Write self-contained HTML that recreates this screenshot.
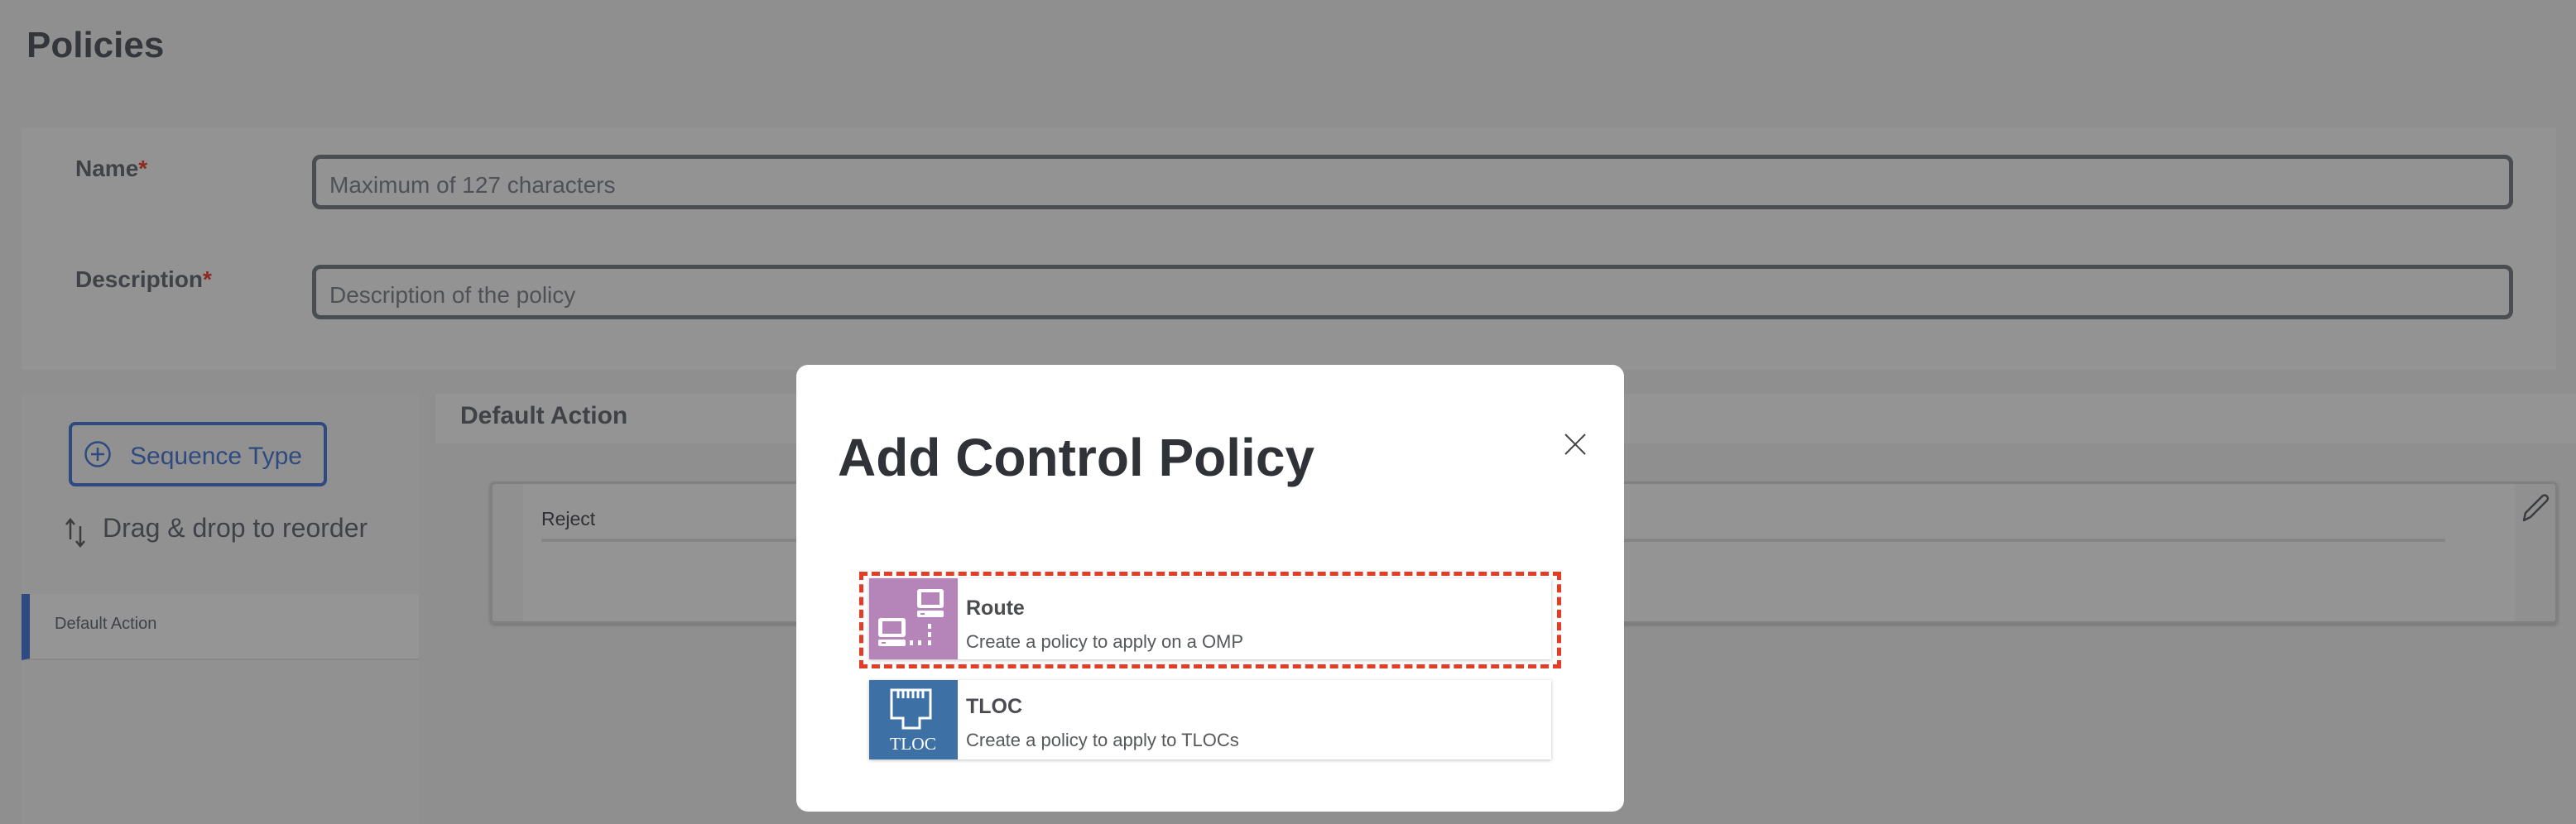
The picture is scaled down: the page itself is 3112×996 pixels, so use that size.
<!DOCTYPE html>
<html><head><meta charset="utf-8"><style>
*{box-sizing:border-box;margin:0;padding:0}
body{width:3112px;height:996px;background:#8f8f8f;font-family:"Liberation Sans",sans-serif;color:#3a3c40;position:relative;overflow:hidden}
.a{position:absolute}
.inp{position:absolute;left:377px;width:2659px;height:66px;border:5px solid #4a4d52;border-radius:10px;font-size:28px;color:#4e5156;padding:16px 0 0 16px}
.lbl{position:absolute;left:91px;font-size:28px;font-weight:bold;color:#3f4247}
.lbl b{color:#8b2a22}
.card{position:absolute;left:1050px;width:824px;background:#fff;box-shadow:0 1px 4px rgba(0,0,0,.25)}
.card .ic{position:absolute;left:0;top:0}
.card .t{position:absolute;left:117px;font-size:25px;font-weight:bold;color:#4a4c50}
.card .d{position:absolute;left:117px;font-size:22px;color:#55585c}
</style></head><body>
<div class="a" style="left:32px;top:30px;font-size:44px;font-weight:bold;color:#33363a">Policies</div>
<div class="a" style="left:26px;top:155px;width:3062px;height:292px;background:#939393"></div>
<div class="lbl" style="top:188px">Name<b>*</b></div>
<div class="inp" style="top:187px">Maximum of 127 characters</div>
<div class="lbl" style="top:322px">Description<b>*</b></div>
<div class="inp" style="top:320px">Description of the policy</div>

<div class="a" style="left:26px;top:476px;width:480px;height:520px;background:#919191"></div>
<div class="a" style="left:83px;top:510px;width:312px;height:78px;border:4px solid #2f4a80;border-radius:8px;color:#2f4a80;font-size:30px;padding:21px 0 0 70px">Sequence Type</div>
<svg class="a" style="left:101px;top:532px" width="34" height="34"><circle cx="17" cy="17" r="14.5" fill="none" stroke="#2f4a80" stroke-width="2.5"/><path d="M17 9v16M9 17h16" stroke="#2f4a80" stroke-width="2.5"/></svg>
<svg class="a" style="left:76px;top:626px" width="30" height="36"><path d="M9 2v24M4 8l5-6 5 6M21 10v24M16 28l5 6 5-6" stroke="#3a3c40" stroke-width="2.5" fill="none"/></svg>
<div class="a" style="left:124px;top:620px;font-size:32px;color:#3f4247">Drag &amp; drop to reorder</div>
<div class="a" style="left:26px;top:718px;width:480px;height:80px;background:#959595;border-bottom:2px solid #888;border-left:10px solid #2f4a80"></div>
<div class="a" style="left:66px;top:743px;font-size:20px;color:#3f4247">Default Action</div>

<div class="a" style="left:526px;top:476px;width:2586px;height:60px;background:#949494"></div>
<div class="a" style="left:556px;top:486px;font-size:30px;font-weight:bold;color:#3f4247">Default Action</div>
<div class="a" style="left:592px;top:582px;width:2498px;height:172px;background:#909090;border:3px solid #808080;border-radius:6px;box-shadow:0 2px 4px rgba(0,0,0,.2)"></div>
<div class="a" style="left:632px;top:585px;width:2406px;height:166px;background:#949494"></div>
<div class="a" style="left:654px;top:614px;font-size:23px;color:#2f3135">Reject</div>
<div class="a" style="left:654px;top:651px;width:2300px;height:4px;background:#858585"></div>
<svg class="a" style="left:3044px;top:594px" width="40" height="40"><path d="M5 35l2-9 20-20a3.5 3.5 0 0 1 6 5L13 31z" fill="none" stroke="#3a3c40" stroke-width="2.5" stroke-linejoin="round"/></svg>

<div class="a" style="left:962px;top:441px;width:1000px;height:540px;background:#fff;border-radius:14px"></div>
<div class="a" style="left:1012px;top:516px;font-size:64px;font-weight:bold;color:#2f3236">Add Control Policy</div>
<svg class="a" style="left:1890px;top:524px" width="26" height="26"><path d="M1 1l24 24M25 1L1 25" stroke="#444" stroke-width="2"/></svg>

<div class="card" style="top:699px;height:98px">
<svg class="ic" width="107" height="98" viewBox="0 0 107 98" style="background:#b584b9"><rect x="58" y="13" width="32" height="23" rx="3" fill="#fff"/><rect x="63" y="17" width="22" height="15" fill="#b584b9"/><rect x="58" y="39" width="32" height="8" rx="2" fill="#fff"/><rect x="62" y="42" width="5" height="2" fill="#b584b9"/><rect x="11" y="48" width="33" height="23" rx="3" fill="#fff"/><rect x="16" y="52" width="23" height="15" fill="#b584b9"/><rect x="11" y="74" width="33" height="8" rx="2" fill="#fff"/><rect x="15" y="77" width="5" height="2" fill="#b584b9"/><rect x="71" y="55" width="4" height="6" fill="#fff"/><rect x="71" y="65" width="4" height="6" fill="#fff"/><rect x="49" y="75" width="4" height="6" fill="#fff"/><rect x="59" y="75" width="4" height="6" fill="#fff"/><rect x="71" y="75" width="4" height="6" fill="#fff"/></svg>
<div class="t" style="top:22px">Route</div><div class="d" style="top:64px">Create a policy to apply on a OMP</div></div>
<div class="a" style="left:1038px;top:691px;width:848px;height:117px;border:5px dashed #e53d25"></div>

<div class="card" style="top:822px;height:96px">
<svg class="ic" width="107" height="96" viewBox="0 0 107 96" style="background:#3d71a6"><path d="M27 12h47v34H61v12H41V46H27z" fill="none" stroke="#fff" stroke-width="3"/><path d="M35 12v10M41 12v10M47 12v10M53 12v10M59 12v10M65 12v10" stroke="#fff" stroke-width="3"/><text x="53" y="84" text-anchor="middle" font-family="Liberation Serif,serif" font-size="21" fill="#fff" textLength="56" lengthAdjust="spacingAndGlyphs">TLOC</text></svg>
<div class="t" style="top:18px">TLOC</div><div class="d" style="top:60px">Create a policy to apply to TLOCs</div></div>
</body></html>
